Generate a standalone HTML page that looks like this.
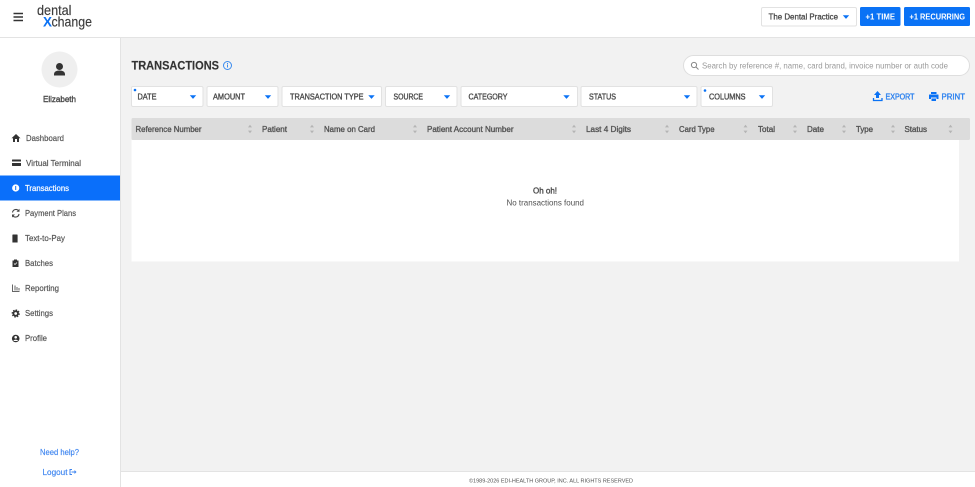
<!DOCTYPE html>
<html><head><meta charset="utf-8"><style>
html,body{margin:0;padding:0;width:975px;height:487px;overflow:hidden;background:#f2f2f2}
svg{display:block}
text{font-family:"Liberation Sans",sans-serif;font-size:8px;fill:#444;}
.b{font-weight:bold}
.nav{font-size:8.6px;fill:#555;stroke:#555;stroke-width:.2}
.f{font-size:8.2px;fill:#4a4a4a;stroke:#4a4a4a;stroke-width:.36}
.h{font-size:8.2px;fill:#555;stroke:#555;stroke-width:.36}
.box{fill:#fff;stroke:#e2e2e2;stroke-width:1}
.blue{fill:#0a72f5}
</style></head><body>
<svg width="975" height="487" viewBox="0 0 975 487" xmlns="http://www.w3.org/2000/svg">
<defs>
<g id="sort"><path d="M0-4.200 2-1.600H-2Z M0 4.200 2 1.600H-2Z" fill="#b4b4b4"/></g>
<path id="caret" d="M-3.200-1.700H3.200L0 1.900Z" fill="#0a72f5"/>
</defs>
<rect width="975" height="487" fill="#f2f2f2"/>
<!-- header -->
<rect width="975" height="37" fill="#fff"/>
<rect y="37" width="975" height="1" fill="#e3e3e3"/>
<path d="M13.500 13.500H23M13.500 17H23M13.500 20.500H23" stroke="#333" stroke-width="1.500"/>
<text x="37" y="15" textLength="34.500" lengthAdjust="spacingAndGlyphs" style="font-size:14px;fill:#3c3c3c;stroke:#3c3c3c;stroke-width:.15">dental</text>
<text x="43" y="26.500" textLength="9" lengthAdjust="spacingAndGlyphs" class="b" style="font-size:14px;fill:#0a72f5">X</text>
<text x="51.500" y="26.500" textLength="40.500" lengthAdjust="spacingAndGlyphs" style="font-size:14px;fill:#3c3c3c;stroke:#3c3c3c;stroke-width:.15">change</text>
<rect class="box" x="761.500" y="7.500" width="95" height="18.500" rx="1.500"/>
<text x="768.500" y="19.500" textLength="69.500" lengthAdjust="spacingAndGlyphs" style="font-size:8.400px;fill:#4a4a4a;stroke:#4a4a4a;stroke-width:.3">The Dental Practice</text>
<use href="#caret" x="846" y="17"/>
<rect class="blue" x="860" y="7" width="40.500" height="19" rx="1.500"/>
<text x="865.500" y="19.500" textLength="29.500" lengthAdjust="spacingAndGlyphs" class="b" style="font-size:8.400px;fill:#fff">+1 TIME</text>
<rect class="blue" x="904" y="7" width="66" height="19" rx="1.500"/>
<text x="909.500" y="19.500" textLength="55.500" lengthAdjust="spacingAndGlyphs" class="b" style="font-size:8.400px;fill:#fff">+1 RECURRING</text>
<!-- sidebar -->
<rect y="38" width="120" height="449" fill="#fff"/>
<rect x="120" y="38" width="1" height="449" fill="#e3e3e3"/>
<circle cx="59.500" cy="69.500" r="18" fill="#efefef"/>
<circle cx="59.500" cy="66.500" r="3.500" fill="#333"/>
<path d="M54 75.500v-1.200c0-2.400 2-3.800 5.500-3.800s5.500 1.400 5.500 3.800v1.200Z" fill="#333"/>
<text x="43" y="102" textLength="33" lengthAdjust="spacingAndGlyphs" style="font-size:8.500px;fill:#4a4a4a;stroke:#4a4a4a;stroke-width:.38">Elizabeth</text>
<rect y="175.500" width="120" height="25" fill="#0a6ffa"/>
<!-- nav icons -->
<path d="M16 134 20.500 138.200H19V142H17V139H15V142H13V138.200H11.500Z" fill="#333"/>
<path d="M12.500 159.500H20.500a.5.500 0 0 1 .5.500V161.500H12V160a.5.500 0 0 1 .5-.5ZM12 163H21V165.500a.5.500 0 0 1-.5.500H12.500a.5.500 0 0 1-.5-.5Z" fill="#333"/>
<circle cx="15.700" cy="188" r="3.600" fill="#fff"/><rect x="15.200" y="186" width="1" height="4" fill="#0a6ffa"/>
<path d="M12.500 212.500a3.500 3.500 0 0 1 6-2M19 214a3.500 3.500 0 0 1-6 2" fill="none" stroke="#444" stroke-width="1.100"/><path d="M19.500 208.800v3h-3ZM12 217.500v-3h3Z" fill="#444"/>
<path d="M13 234.500h4a.6.600 0 0 1 .6.600v7.400h-5.200v-7.400a.6.600 0 0 1 .6-.6Z" fill="#333"/>
<path d="M12.500 260.500h1.500v-1h3v1h1.500v6.500h-6Z" fill="#333"/><path d="M14 263.500l1 1 2-2" fill="none" stroke="#fff" stroke-width=".7"/>
<path d="M12.500 284.500v7h7" fill="none" stroke="#666" stroke-width="1"/><path d="M14.500 285.500h1v5h-1ZM16.500 287h1v3.500h-1ZM18.500 288h1v2.500h-1Z" fill="#666"/>
<circle cx="15.700" cy="313.500" r="2.300" fill="none" stroke="#333" stroke-width="1.800"/><circle cx="15.700" cy="313.500" r="3.600" fill="none" stroke="#333" stroke-width="1" stroke-dasharray="1.500 1.300"/>
<circle cx="15.700" cy="338.500" r="3.800" fill="#333"/><circle cx="15.700" cy="337.300" r="1.300" fill="#fff"/><path d="M13.400 341a2.400 2 0 0 1 4.600 0Z" fill="#fff"/>
<!-- nav text -->
<text class="nav" x="26" y="141" textLength="38" lengthAdjust="spacingAndGlyphs">Dashboard</text>
<text class="nav" x="26" y="166" textLength="55" lengthAdjust="spacingAndGlyphs">Virtual Terminal</text>
<text class="nav" x="25" y="191" textLength="44" lengthAdjust="spacingAndGlyphs" style="fill:#fff;stroke:#fff">Transactions</text>
<text class="nav" x="25" y="216" textLength="51" lengthAdjust="spacingAndGlyphs">Payment Plans</text>
<text class="nav" x="25" y="241" textLength="40" lengthAdjust="spacingAndGlyphs">Text-to-Pay</text>
<text class="nav" x="25" y="266" textLength="28" lengthAdjust="spacingAndGlyphs">Batches</text>
<text class="nav" x="25" y="291" textLength="34" lengthAdjust="spacingAndGlyphs">Reporting</text>
<text class="nav" x="25" y="316" textLength="28" lengthAdjust="spacingAndGlyphs">Settings</text>
<text class="nav" x="25" y="341" textLength="22" lengthAdjust="spacingAndGlyphs">Profile</text>
<text x="40" y="455" textLength="39" lengthAdjust="spacingAndGlyphs" style="font-size:8.600px;fill:#3f86f0;stroke:#3f86f0;stroke-width:.15">Need help?</text>
<text x="42.500" y="475" textLength="25" lengthAdjust="spacingAndGlyphs" style="font-size:8.600px;fill:#3f86f0;stroke:#3f86f0;stroke-width:.15">Logout</text>
<path d="M72 469.500h-2v5h2M71.500 472h3.500" fill="none" stroke="#3f86f0" stroke-width="1"/><path d="M74.500 470 76.500 472 74.500 474Z" fill="#3f86f0"/>
<!-- title -->
<text x="131.500" y="69.500" textLength="87.500" lengthAdjust="spacingAndGlyphs" style="font-size:11.500px;fill:#333;font-weight:bold;stroke:#333;stroke-width:.15">TRANSACTIONS</text>
<circle cx="227.500" cy="65.500" r="4" fill="none" stroke="#3b8bee" stroke-width="1"/><rect x="227" y="64.500" width="1" height="3" fill="#3b8bee"/><rect x="227" y="63" width="1" height="1" fill="#3b8bee"/>
<!-- search -->
<rect x="683.500" y="55.500" width="286" height="20" rx="10" fill="#fff" stroke="#dedede"/>
<circle cx="694" cy="65" r="2.600" fill="none" stroke="#888" stroke-width="1"/><path d="M696 67 698.500 69.500" stroke="#888" stroke-width="1"/>
<text x="702" y="68.500" textLength="246" lengthAdjust="spacingAndGlyphs" style="font-size:8.600px;fill:#9a9a9a">Search by reference #, name, card brand, invoice number or auth code</text>
<!-- filters -->
<rect class="box" x="131.500" y="86.500" width="71.500" height="20" rx="1.500"/>
<rect class="box" x="207" y="86.500" width="71" height="20" rx="1.500"/>
<rect class="box" x="282" y="86.500" width="99.500" height="20" rx="1.500"/>
<rect class="box" x="385.500" y="86.500" width="71.500" height="20" rx="1.500"/>
<rect class="box" x="461" y="86.500" width="116.500" height="20" rx="1.500"/>
<rect class="box" x="581" y="86.500" width="116" height="20" rx="1.500"/>
<rect class="box" x="701" y="86.500" width="71.500" height="20" rx="1.500"/>
<circle cx="135" cy="90" r="1.300" fill="#0a72f5"/><circle cx="705" cy="90.500" r="1.300" fill="#0a72f5"/>
<text class="f" x="137.500" y="99.300" textLength="19" lengthAdjust="spacingAndGlyphs">DATE</text>
<text class="f" x="213" y="99.300" textLength="32" lengthAdjust="spacingAndGlyphs">AMOUNT</text>
<text class="f" x="290" y="99.300" textLength="73.500" lengthAdjust="spacingAndGlyphs">TRANSACTION TYPE</text>
<text class="f" x="393.500" y="99.300" textLength="29.500" lengthAdjust="spacingAndGlyphs">SOURCE</text>
<text class="f" x="468.500" y="99.300" textLength="39" lengthAdjust="spacingAndGlyphs">CATEGORY</text>
<text class="f" x="589" y="99.300" textLength="27" lengthAdjust="spacingAndGlyphs">STATUS</text>
<text class="f" x="709" y="99.300" textLength="36.500" lengthAdjust="spacingAndGlyphs">COLUMNS</text>
<use href="#caret" x="193" y="97"/><use href="#caret" x="268" y="97"/><use href="#caret" x="371.500" y="97"/><use href="#caret" x="447" y="97"/><use href="#caret" x="566.500" y="97"/><use href="#caret" x="687" y="97"/><use href="#caret" x="762" y="97"/>
<!-- export print -->
<path d="M877.500 91 881 95H879V98H876V95H874Z" fill="#0a72f5"/><path d="M873.500 98v2.500H882V98" fill="none" stroke="#0a72f5" stroke-width="1.300"/>
<text x="885.500" y="99.500" textLength="29" lengthAdjust="spacingAndGlyphs" style="font-size:8.200px;fill:#2a80ef;stroke:#2a80ef;stroke-width:.35">EXPORT</text>
<path d="M931 92h5.500v2H931ZM929.500 94.500h8.500a.5.500 0 0 1 .5.500v4h-2v-1.500h-5.500V99h-2v-4a.5.500 0 0 1 .5-.5ZM931.500 98.500h4.500V101h-4.500Z" fill="#0a72f5"/>
<text x="941.500" y="99.500" textLength="23.500" lengthAdjust="spacingAndGlyphs" style="font-size:8.200px;fill:#2a80ef;stroke:#2a80ef;stroke-width:.35">PRINT</text>
<!-- table -->
<rect x="131.500" y="140" width="827.500" height="121.500" fill="#fff"/>
<rect x="131.500" y="118" width="838.500" height="22" rx="1.500" fill="#dcdcdc"/>
<text class="h" x="135.500" y="132" textLength="66" lengthAdjust="spacingAndGlyphs">Reference Number</text>
<text class="h" x="262" y="132" textLength="25" lengthAdjust="spacingAndGlyphs">Patient</text>
<text class="h" x="324" y="132" textLength="51" lengthAdjust="spacingAndGlyphs">Name on Card</text>
<text class="h" x="427" y="132" textLength="86.500" lengthAdjust="spacingAndGlyphs">Patient Account Number</text>
<text class="h" x="586" y="132" textLength="45" lengthAdjust="spacingAndGlyphs">Last 4 Digits</text>
<text class="h" x="679" y="132" textLength="35.500" lengthAdjust="spacingAndGlyphs">Card Type</text>
<text class="h" x="758" y="132" textLength="17" lengthAdjust="spacingAndGlyphs">Total</text>
<text class="h" x="807" y="132" textLength="17" lengthAdjust="spacingAndGlyphs">Date</text>
<text class="h" x="856" y="132" textLength="17" lengthAdjust="spacingAndGlyphs">Type</text>
<text class="h" x="904.500" y="132" textLength="22.500" lengthAdjust="spacingAndGlyphs">Status</text>
<use href="#sort" x="250" y="129"/><use href="#sort" x="312" y="129"/><use href="#sort" x="415" y="129"/><use href="#sort" x="574" y="129"/><use href="#sort" x="667" y="129"/><use href="#sort" x="745.500" y="129"/><use href="#sort" x="795" y="129"/><use href="#sort" x="844" y="129"/><use href="#sort" x="893" y="129"/><use href="#sort" x="950.500" y="129"/>
<text x="533" y="193.500" textLength="24" lengthAdjust="spacingAndGlyphs" style="font-size:8.400px;fill:#505050;stroke:#505050;stroke-width:.38">Oh oh!</text>
<text x="506.500" y="205.500" textLength="77.500" lengthAdjust="spacingAndGlyphs" style="font-size:8.400px;fill:#505050">No transactions found</text>
<!-- footer -->
<rect x="121" y="471.500" width="854" height="15.500" fill="#fff"/>
<rect x="121" y="471" width="854" height="1" fill="#e3e3e3"/>
<text x="469" y="482.500" textLength="164" lengthAdjust="spacingAndGlyphs" style="font-size:5.800px;fill:#555">©1989-2026 EDI-HEALTH GROUP, INC. ALL RIGHTS RESERVED</text>
</svg>
</body></html>
